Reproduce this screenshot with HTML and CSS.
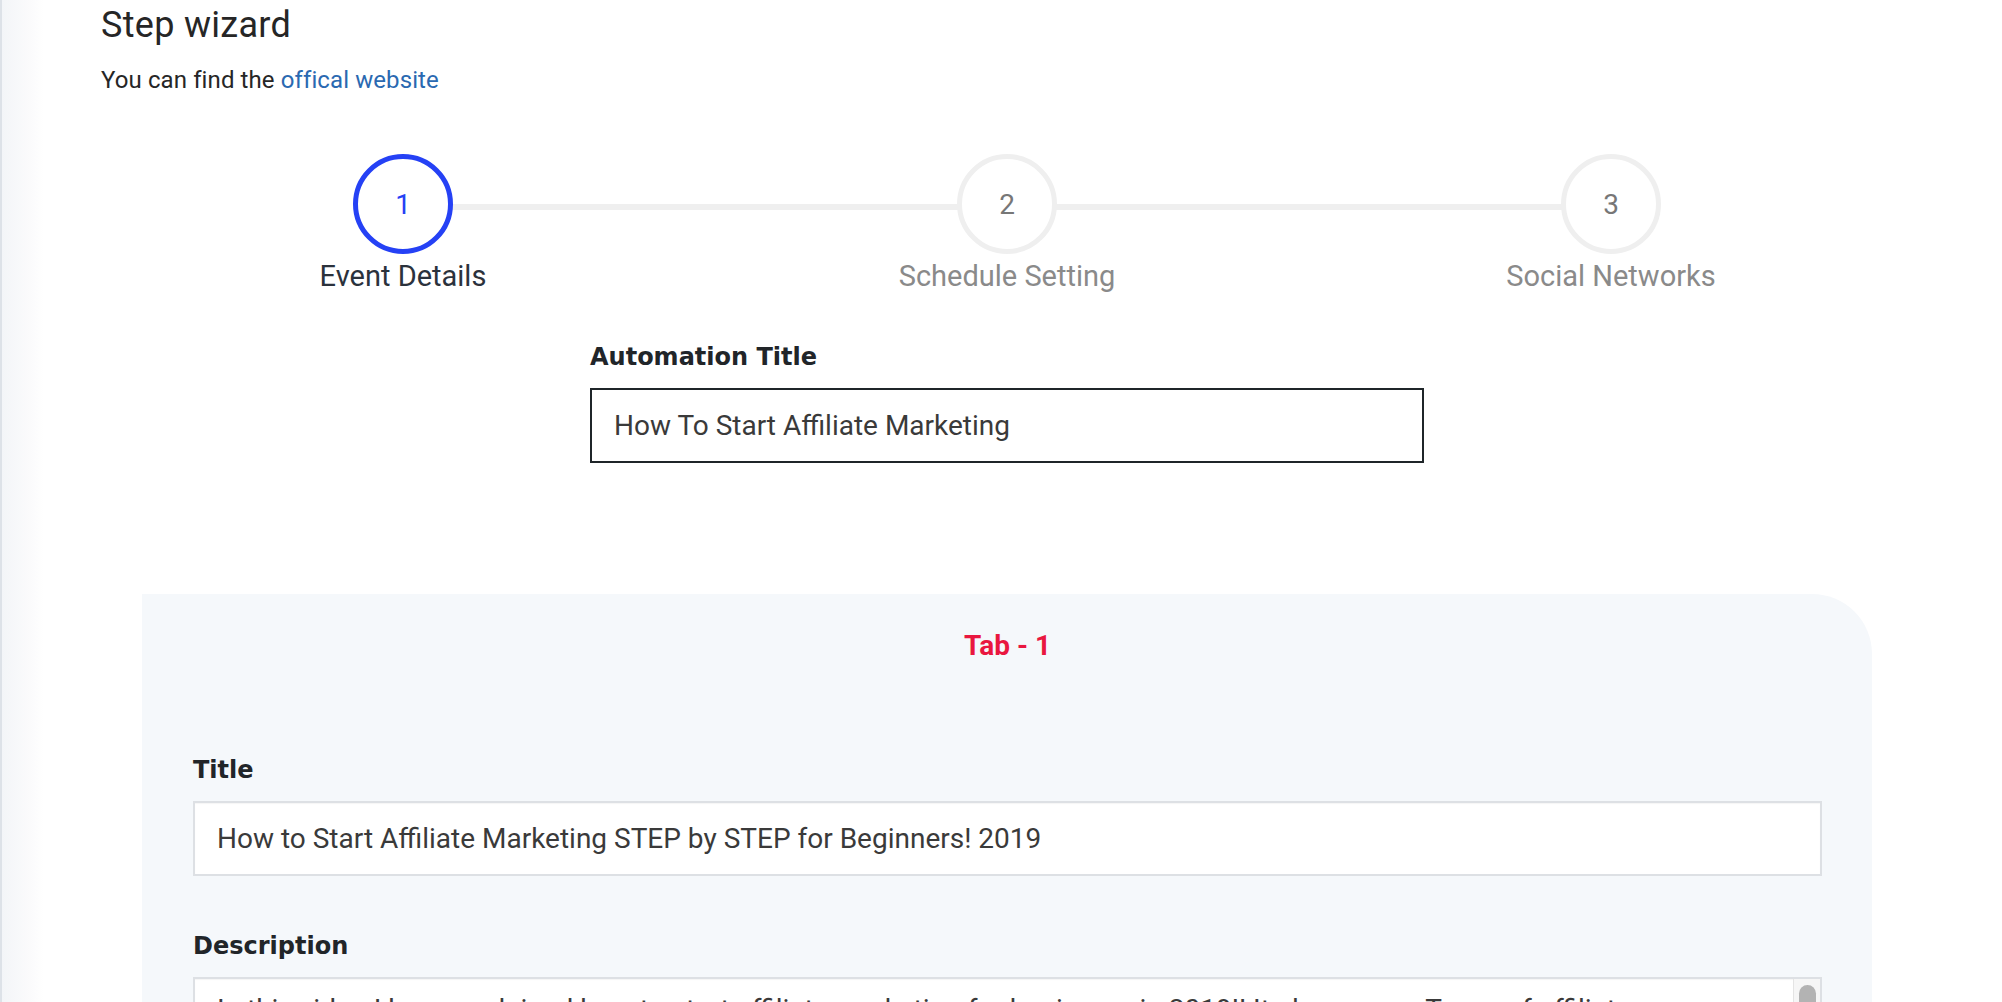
FILE: index.html
```html
<!DOCTYPE html>
<html lang="en">
<head>
<meta charset="utf-8">
<title>Step wizard</title>
<link rel="stylesheet" href="styles.css">
</head>
<body>
<main class="page">
  <h1 class="page-title">Step wizard</h1>
  <p class="page-intro">You can find the <a class="link" href="#">offical website</a></p>

  <ol class="steps">
    <li class="step active">
      <span class="step-circle">1</span>
      <span class="step-label">Event Details</span>
    </li>
    <li class="step">
      <span class="step-circle">2</span>
      <span class="step-label">Schedule Setting</span>
    </li>
    <li class="step">
      <span class="step-circle">3</span>
      <span class="step-label">Social Networks</span>
    </li>
  </ol>

  <div class="field field-narrow">
    <label class="field-label" for="automation">Automation Title</label>
    <input class="input input-dark" id="automation" type="text" value="How To Start Affiliate Marketing">
  </div>

  <section class="panel">
    <h2 class="tab-title">Tab - 1</h2>

    <div class="field field-title">
      <label class="field-label" for="title">Title</label>
      <input class="input input-soft" id="title" type="text" value="How to Start Affiliate Marketing STEP by STEP for Beginners! 2019">
    </div>

    <div class="field field-desc">
      <label class="field-label" for="desc">Description</label>
      <div class="textarea-box">
        <textarea class="input input-soft textarea" id="desc">In this video I have explained how to start affiliate marketing for beginners in 2019!! It also covers Types of affiliate programs, how to pick a niche, how to find the best affiliate offers and how to drive traffic to them step by step. Watch the complete video to understand everything about affiliate marketing and start earning your first commission online. Subscribe for more videos about online marketing, blogging and making money online.</textarea>
        <div class="scrollbar" aria-hidden="true"><div class="scrollbar-thumb"></div></div>
      </div>
    </div>
  </section>
</main>
</body>
</html>
```
FILE: styles.css
```css
* {
  box-sizing: border-box;
}

html,
body {
  margin: 0;
  padding: 0;
}

body {
  height: 100vh;
  overflow: hidden;
  font-family: Roboto, "Liberation Sans", sans-serif;
  color: #222;
  background-color: #fff;
  background-image: linear-gradient(to right, #dde2e8 0, #dde2e8 2px, #f3f5f8 2px, #f7f8fa 16px, #fbfbfc 30px, #fff 44px);
  background-repeat: no-repeat;
}

.page {
  padding: 3px 89px 0 101px;
}

.page-title {
  margin: 0;
  font-size: 36px;
  line-height: 44px;
  font-weight: 400;
  letter-spacing: 0.3px;
  color: #262626;
}

.page-intro {
  margin: 18px 0 0;
  font-size: 24px;
  line-height: 30px;
  letter-spacing: 0.1px;
  color: #262626;
}

.link {
  color: #2a69b1;
  text-decoration: none;
}

.steps {
  list-style: none;
  margin: 59px 0 0;
  padding: 0;
  display: grid;
  grid-template-columns: repeat(3, 1fr);
}

.step {
  position: relative;
  display: flex;
  flex-direction: column;
  align-items: center;
}

.step + .step::before {
  content: "";
  position: absolute;
  top: 50px;
  right: 50%;
  width: 100%;
  height: 6px;
  background: #efefef;
}

.step-circle {
  position: relative;
  z-index: 1;
  width: 100px;
  height: 100px;
  border-radius: 50%;
  border: 5px solid #efefef;
  background: #fff;
  display: flex;
  align-items: center;
  justify-content: center;
  font-size: 28px;
  color: #777;
}

.step.active .step-circle {
  border-color: #2541f5;
  color: #2541f5;
}

.step-label {
  margin-top: 5px;
  font-size: 29px;
  line-height: 34px;
  color: #8a8a8a;
}

.step.active .step-label {
  color: #2b323c;
}

.field-narrow {
  width: 834px;
  margin: 49px auto 0;
}

.field-label {
  display: block;
  margin-bottom: 16px;
  font-family: "DejaVu Sans", Roboto, sans-serif;
  font-weight: 700;
  font-size: 24px;
  line-height: 30px;
  color: #212529;
}

.input {
  display: block;
  width: 100%;
  height: 75px;
  margin: 0;
  padding: 0 22px;
  border-radius: 0;
  background: #fff;
  font-family: Roboto, "Liberation Sans", sans-serif;
  font-size: 28px;
  color: #3a3a3a;
  outline: none;
}

.input-dark {
  border: 2px solid #1f2529;
}

.input-soft {
  border: 2px solid #dde0e4;
  box-shadow: inset 0 1px 1px rgba(0, 0, 0, 0.04);
}

.panel {
  margin: 131px 41px 0;
  padding: 35px 50px 0 51px;
  background: #f5f8fb;
  border-radius: 0 60px 0 0;
  min-height: 600px;
}

.tab-title {
  margin: 0;
  text-align: center;
  font-family: Roboto, "Liberation Sans", sans-serif;
  font-weight: 700;
  font-size: 28px;
  line-height: 34px;
  color: #e9173f;
}

.field-title {
  margin-top: 92px;
}

.field-desc {
  margin-top: 55px;
}

.textarea-box {
  position: relative;
}

.textarea {
  height: 240px;
  padding: 12px 50px 12px 22px;
  line-height: 38px;
  resize: none;
  overflow: hidden;
}

.scrollbar {
  position: absolute;
  top: 2px;
  right: 2px;
  bottom: 2px;
  width: 27px;
  background: #f6f6f6;
  border-left: 1px solid #e4e4e4;
}

.scrollbar-thumb {
  width: 17px;
  height: 120px;
  margin: 6px auto 0;
  border-radius: 9px;
  background: #b3b3b3;
}
```
